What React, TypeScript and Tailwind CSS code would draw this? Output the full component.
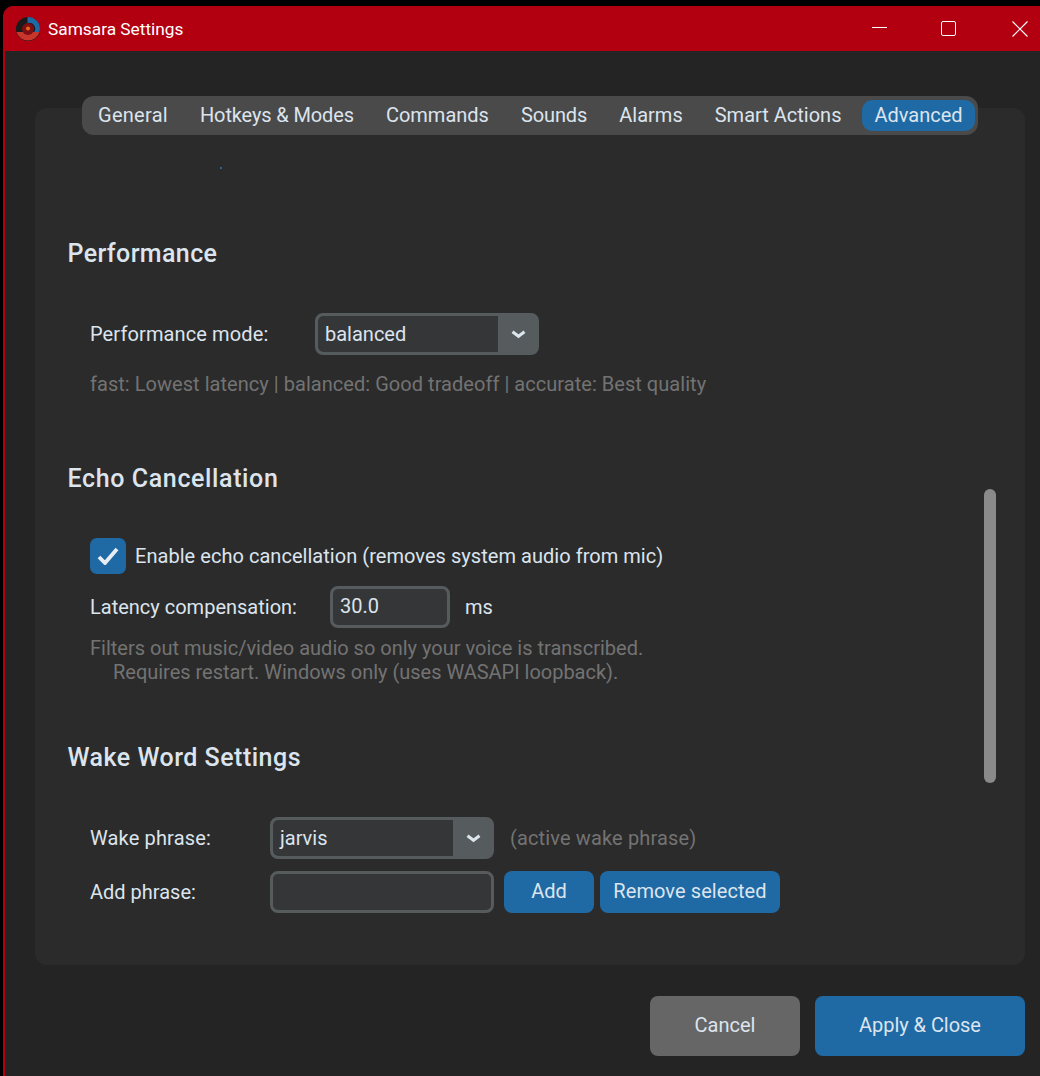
const tabs = [
  { label: "General", extra: "px-[13px] tracking-[0.28px]" },
  { label: "Hotkeys & Modes", extra: "px-[13px] tracking-[-0.13px]" },
  { label: "Commands", extra: "px-[13px]" },
  { label: "Sounds", extra: "px-[13px] tracking-[-0.1px]" },
  { label: "Alarms", extra: "px-[13px]" },
  { label: "Smart Actions", extra: "px-[13px]" },
  { label: "Advanced", extra: "ml-[2px] px-[12px] bg-[#1f6aa5]" },
];

function Logo() {
  return (
    <svg width="26" height="26" viewBox="0 0 26 26" fill="none">
      <circle cx="13" cy="13" r="12" fill="#1a1a1a" />
      <path d="M12.5 1a12 12 0 0 1 12.5 12l-.6 3h-5.2a6 6 0 0 0-6.7-9z" fill="#1f6aa5" />
      <path d="M1.5 16h23A12 12 0 0 1 1.5 16z" fill="#c9372c" />
      <circle cx="13" cy="13" r="6" fill="#7d0f14" />
      <circle cx="13" cy="12.5" r="2" fill="#e8641a" />
    </svg>
  );
}

function Heading({ children, className }: { children: string; className: string }) {
  return <h2 className={`h-[30px] pt-[1px] pl-[32.5px] text-[25px] leading-[30px] font-medium text-[#dce4ee] ${className}`}>{children}</h2>;
}

function Select({ value, width }: { value: string; width: string }) {
  return (
    <div className={`flex h-[42px] items-stretch overflow-hidden rounded-[8px] border-[3px] border-[#565b5e] bg-[#565b5e] ${width}`}>
      <div className="flex flex-1 items-center rounded-l-[5px] bg-[#343638] pl-[7px] text-[20px] text-[#dce4ee]">{value}</div>
      <div className="flex w-[38px] items-center justify-center pl-[2px]">
        <svg width="15" height="9" viewBox="0 0 15 9" fill="none" stroke="#dce4ee" strokeWidth="3">
          <path d="M1.5 1.8L7.5 6.3L13.5 1.8" />
        </svg>
      </div>
    </div>
  );
}

export default function App() {
  return (
    <div className="h-[1076px] overflow-hidden bg-black pt-[6px] pl-[3px] font-['Roboto',sans-serif] text-[20px] text-[#dce4ee]">
      <div className="h-[1070px] overflow-hidden rounded-tl-[10px] border-l-2 border-[#b30010] bg-[#242424]">
        <div className="flex h-[45px] items-center bg-[#b30010] pl-[10px] text-white">
          <Logo />
          <span className="ml-[7px] pt-[2px] text-[17.3px]">Samsara Settings</span>
          <div className="ml-auto flex items-center">
            <div className="mr-[54px] mb-[2px] h-px w-[15px] bg-white" />
            <div className="mr-[56px] h-[15px] w-[15px] rounded-[2px] border-[1.5px] border-white" />
            <svg width="16" height="16" viewBox="0 0 16 16" className="mr-[12px]" stroke="white" strokeWidth="1.2">
              <path d="M.5.5l15 15M15.5.5l-15 15" />
            </svg>
          </div>
        </div>

        <div className="relative mt-[57px] ml-[30px] h-[857px] w-[990px] rounded-[12px] bg-[#2b2b2b] pt-[130px]">
          <div className="absolute top-[-12px] left-[47px] flex h-[39px] w-[896px] items-center gap-[6px] rounded-[12px] bg-[#4a4a4a] pl-[3px]">
            {tabs.map((tab) => (
              <div key={tab.label} className={`flex h-[31px] items-center rounded-[10px] pb-[2px] ${tab.extra}`}>
                {tab.label}
              </div>
            ))}
          </div>
          <div className="absolute top-[59px] left-[185px] h-[2px] w-[2px] bg-[#2a5db0]" />
          <div className="absolute top-[381px] left-[949px] h-[294px] w-[12px] rounded-full bg-[#8a8a8a]" />

          <Heading className="tracking-[0.38px]">Performance</Heading>
          <div className="mt-[45px] flex items-center pl-[55px]">
            <span className="w-[225px] tracking-[0.12px]">Performance mode:</span>
            <Select value="balanced" width="w-[224px]" />
          </div>
          <p className="mt-[17px] pl-[55px] leading-[24px] tracking-[0.04px] text-[#737373]">fast: Lowest latency | balanced: Good tradeoff | accurate: Best quality</p>

          <Heading className="mt-[67px] tracking-[0.62px]">Echo Cancellation</Heading>
          <div className="mt-[45px] flex items-center pl-[55px]">
            <div className="flex h-[36px] w-[36px] items-center justify-center rounded-[7px] bg-[#1f6aa5]">
              <svg width="22" height="18" viewBox="0 0 22 18" fill="none" stroke="#e8eef4" strokeWidth="3.8">
                <path d="M2 10l6 6L20 2" />
              </svg>
            </div>
            <span className="ml-[9px] tracking-[0.04px]">Enable echo cancellation (removes system audio from mic)</span>
          </div>
          <div className="mt-[12px] flex items-center pl-[55px]">
            <span className="w-[240px]">Latency compensation:</span>
            <div className="flex h-[42px] w-[120px] items-center rounded-[8px] border-[3px] border-[#565b5e] bg-[#343638] pb-[2px] pl-[7px]">30.0</div>
            <span className="ml-[15px] pb-[1px]">ms</span>
          </div>
          <p className="mt-[8px] pl-[55px] leading-[24px] text-[#737373]">Filters out music/video audio so only your voice is transcribed.</p>
          <p className="pl-[78px] leading-[24px] tracking-[-0.02px] text-[#737373]">Requires restart. Windows only (uses WASAPI loopback).</p>

          <Heading className="mt-[58px] tracking-[0.49px]">Wake Word Settings</Heading>
          <div className="mt-[45px] flex items-center pl-[55px]">
            <span className="w-[180px] tracking-[0.15px]">Wake phrase:</span>
            <Select value="jarvis" width="w-[224px]" />
            <span className="ml-[16px] tracking-[0.14px] text-[#737373]">(active wake phrase)</span>
          </div>
          <div className="mt-[12px] flex items-center pl-[55px]">
            <span className="w-[180px] pb-[1px]">Add phrase:</span>
            <div className="h-[42px] w-[224px] rounded-[8px] border-[3px] border-[#565b5e] bg-[#343638]" />
            <button className="ml-[10px] h-[42px] w-[90px] rounded-[8px] bg-[#1f6aa5] pb-[2px]">Add</button>
            <button className="ml-[6px] h-[42px] w-[180px] rounded-[8px] bg-[#1f6aa5] pb-[2px] tracking-[0.08px]">Remove selected</button>
          </div>
        </div>

        <div className="mt-[31px] mr-[15px] flex justify-end gap-[15px]">
          <button className="h-[60px] w-[150px] rounded-[8px] bg-[#666666] pb-[2px]">Cancel</button>
          <button className="h-[60px] w-[210px] rounded-[8px] bg-[#1f6aa5] pb-[2px] tracking-[-0.05px]">Apply &amp; Close</button>
        </div>
      </div>
    </div>
  );
}
